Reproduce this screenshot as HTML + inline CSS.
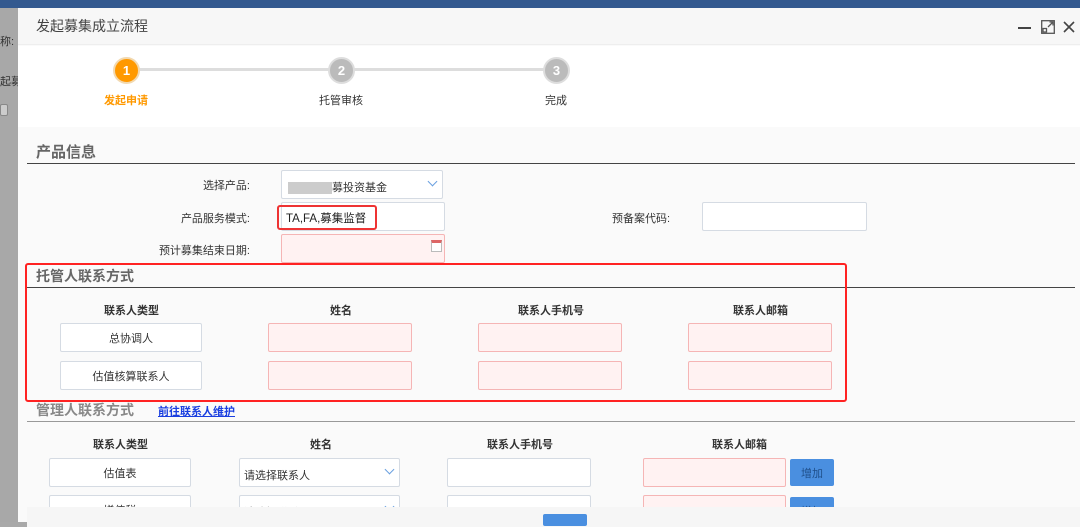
<!DOCTYPE html>
<html><head><meta charset="utf-8"><style>
*{margin:0;padding:0;box-sizing:border-box}
body{width:1080px;height:522px;overflow:hidden;position:relative;background:#a9a9a9;font-family:"Liberation Sans","Noto Sans CJK SC",sans-serif;font-size:11px;color:#333}
.a{position:absolute}
.box{position:absolute;border:1px solid #d5dbe3;background:#fff;border-radius:2px}
.pk{position:absolute;border:1px solid #f5b5b5;background:#fff2f2;border-radius:2px}
.lbl{position:absolute;text-align:right;width:120px}
.h{position:absolute;font-weight:bold;font-size:11px;color:#333}
.ct{display:flex;align-items:center;justify-content:center}
.chev{position:absolute;right:6px;top:7px;width:7px;height:7px;border-right:1.5px solid #6aa0e0;border-bottom:1.5px solid #6aa0e0;transform:rotate(45deg)}
</style></head><body>
<div class="a" style="left:0;top:0;width:1080px;height:8px;background:#33598f"></div>
<div class="a" style="left:0;top:8px;width:18px;height:514px;background:#a8a8a8"></div>
<div class="a" style="left:0;top:33px;color:#333">称:</div>
<div class="a" style="left:0;top:73px;color:#333">起募</div>
<div class="a" style="left:0;top:104px;width:8px;height:12px;border:1px solid #888;border-radius:2px;background:#ccc"></div>
<div class="a" style="left:18px;top:8px;width:1062px;height:514px;background:#fafafa"></div>
<div class="a" style="left:18px;top:8px;width:1062px;height:37px;background:#f7f7f7;border-bottom:1px solid #eee"></div>
<div class="a" style="left:36px;top:16px;font-size:14px;color:#444">发起募集成立流程</div>
<div class="a" style="left:1018px;top:27px;width:13px;height:2px;background:#444"></div>
<svg class="a" style="left:1041px;top:20px" width="14" height="14" viewBox="0 0 14 14" fill="none" stroke="#555" stroke-width="1.3"><rect x="0.7" y="0.7" width="12.6" height="12.6"/><path d="M7 7L12 2M8.5 2H12V5.5M2 8.5V12H5.5V8.5Z"/></svg>
<svg class="a" style="left:1063px;top:21px" width="12" height="12" viewBox="0 0 12 12" stroke="#444" stroke-width="1.6"><path d="M1 1L11 11M11 1L1 11"/></svg>
<div class="a" style="left:18px;top:46px;width:1062px;height:81px;background:#fff"></div>
<div class="a" style="left:126px;top:68px;width:430px;height:3px;background:#ddd"></div>
<div class="a ct" style="left:113px;top:57px;width:27px;height:27px;border-radius:50%;background:#f90;border:2px solid #f2d9b0;color:#fff;font-weight:bold;font-size:13px">1</div>
<div class="a ct" style="left:328px;top:57px;width:27px;height:27px;border-radius:50%;background:#bbb;border:2px solid #ddd;color:#fff;font-weight:bold;font-size:13px">2</div>
<div class="a ct" style="left:543px;top:57px;width:27px;height:27px;border-radius:50%;background:#bbb;border:2px solid #ddd;color:#fff;font-weight:bold;font-size:13px">3</div>
<div class="a" style="left:104px;top:92px;color:#f90;font-weight:bold">发起申请</div>
<div class="a" style="left:319px;top:92px">托管审核</div>
<div class="a" style="left:545px;top:92px">完成</div>

<div class="a" style="left:36px;top:141px;font-size:15px;font-weight:bold;color:#666">产品信息</div>
<div class="a" style="left:27px;top:163px;width:1048px;height:1px;background:#444"></div>
<div class="lbl" style="left:130px;top:177px">选择产品:</div>
<div class="box" style="left:281px;top:170px;width:162px;height:29px"><span class="a" style="left:6px;top:8px"><span style="background:#ccc;color:#ccc">一一一一</span>募投资基金</span><div class="chev"></div></div>
<div class="lbl" style="left:130px;top:210px">产品服务模式:</div>
<div class="box" style="left:281px;top:202px;width:164px;height:29px"></div>
<div class="a" style="left:277px;top:205px;width:100px;height:25px;border:2px solid #e33;border-radius:3px;padding:3px 0 0 7px;font-size:11.5px;color:#222">TA,FA,募集监督</div>
<div class="a" style="left:612px;top:210px">预备案代码:</div>
<div class="box" style="left:702px;top:202px;width:165px;height:29px"></div>
<div class="lbl" style="left:130px;top:242px">预计募集结束日期:</div>
<div class="pk" style="left:281px;top:234px;width:164px;height:29px"><div class="a" style="right:2px;top:5px;width:11px;height:12px;border:1px solid #bbb;border-top:3px solid #d66;background:#fff"></div></div>

<div class="a" style="left:36px;top:266px;font-size:14px;font-weight:bold;color:#666">托管人联系方式</div>
<div class="a" style="left:27px;top:287px;width:1048px;height:1px;background:#444"></div>
<div class="h" style="left:104px;top:302px">联系人类型</div>
<div class="h" style="left:330px;top:302px">姓名</div>
<div class="h" style="left:518px;top:302px">联系人手机号</div>
<div class="h" style="left:733px;top:302px">联系人邮箱</div>
<div class="box ct" style="left:60px;top:323px;width:142px;height:29px">总协调人</div>
<div class="box ct" style="left:60px;top:361px;width:142px;height:29px">估值核算联系人</div>
<div class="pk" style="left:268px;top:323px;width:144px;height:29px"></div>
<div class="pk" style="left:268px;top:361px;width:144px;height:29px"></div>
<div class="pk" style="left:478px;top:323px;width:144px;height:29px"></div>
<div class="pk" style="left:478px;top:361px;width:144px;height:29px"></div>
<div class="pk" style="left:688px;top:323px;width:144px;height:29px"></div>
<div class="pk" style="left:688px;top:361px;width:144px;height:29px"></div>
<div class="a" style="left:25px;top:263px;width:822px;height:139px;border:2px solid #f22;border-radius:3px"></div>

<div class="a" style="left:36px;top:400px;font-size:14px;font-weight:bold;color:#888">管理人联系方式</div>
<div class="a" style="left:158px;top:403px;color:#1a3fe0;text-decoration:underline;font-weight:bold">前往联系人维护</div>
<div class="a" style="left:27px;top:421px;width:1048px;height:1px;background:#999"></div>
<div class="h" style="left:93px;top:436px">联系人类型</div>
<div class="h" style="left:310px;top:436px">姓名</div>
<div class="h" style="left:487px;top:436px">联系人手机号</div>
<div class="h" style="left:712px;top:436px">联系人邮箱</div>
<div class="box ct" style="left:49px;top:458px;width:142px;height:29px">估值表</div>
<div class="box ct" style="left:49px;top:495px;width:142px;height:29px">增值税</div>
<div class="box" style="left:239px;top:458px;width:161px;height:29px"><span class="a" style="left:4px;top:8px">请选择联系人</span><div class="chev"></div></div>
<div class="box" style="left:239px;top:495px;width:161px;height:29px"><span class="a" style="left:4px;top:8px">请选择联系人</span><div class="chev"></div></div>
<div class="box" style="left:447px;top:458px;width:144px;height:29px"></div>
<div class="box" style="left:447px;top:495px;width:144px;height:29px"></div>
<div class="pk" style="left:643px;top:458px;width:143px;height:29px"></div>
<div class="pk" style="left:643px;top:495px;width:143px;height:29px"></div>
<div class="a ct" style="left:790px;top:459px;width:44px;height:27px;background:#4a8fe0;border-radius:2px;color:#1f4f8a">增加</div>
<div class="a ct" style="left:790px;top:497px;width:44px;height:27px;background:#4a8fe0;border-radius:2px;color:#1f4f8a">增加</div>
<div class="a" style="left:27px;top:507px;width:1053px;height:20px;background:#f6f6f6;z-index:5"></div>
<div class="a" style="left:543px;top:514px;width:44px;height:12px;background:#4a8fe0;border-radius:2px;z-index:6"></div>
</body></html>
